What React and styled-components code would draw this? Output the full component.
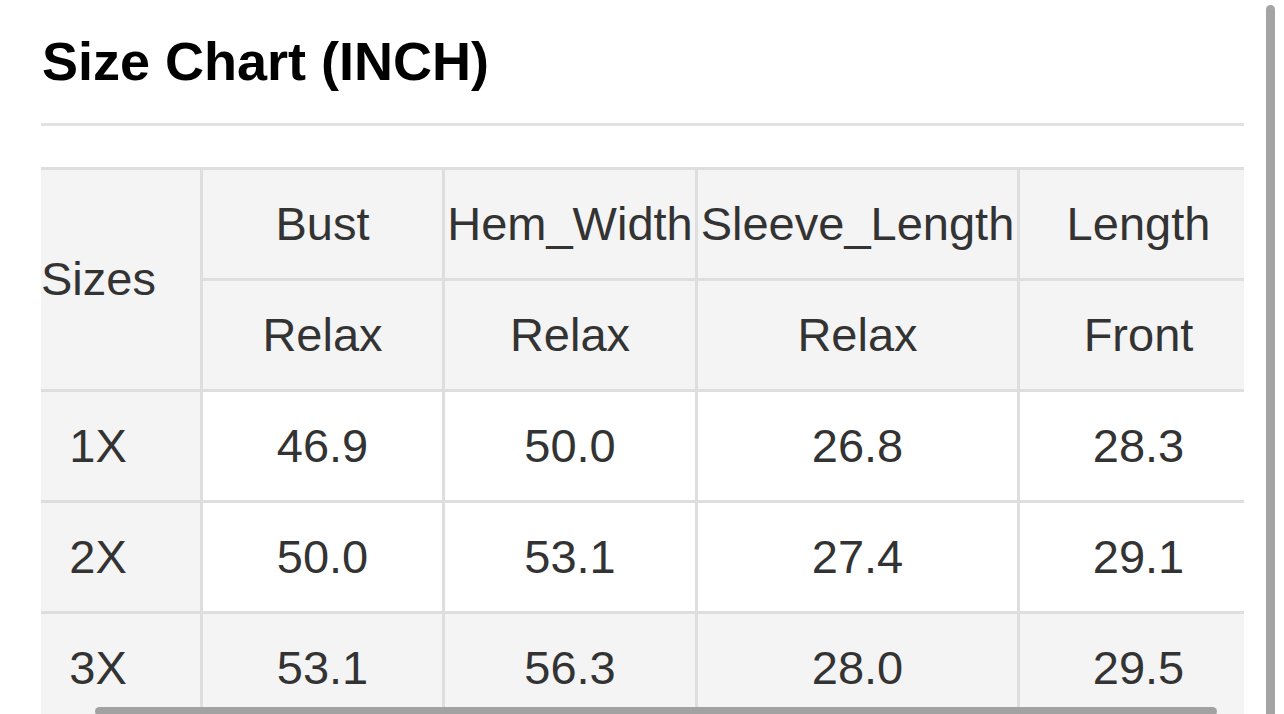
import React from "react";
import styled, { createGlobalStyle } from "styled-components";

const Global = createGlobalStyle`
  html, body { margin: 0; padding: 0; background: #fff; }
  body { font-family: "Liberation Sans", Arial, Helvetica, sans-serif; }
`;

const Screen = styled.div`
  position: relative;
  width: 1284px;
  height: 714px;
  overflow: hidden;
  background: #fff;
`;

const Content = styled.div`
  width: 1203px;
  padding: 30px 0 0 41px;
`;

const Title = styled.h1`
  margin: 0 0 0 1px;
  font-size: 54px;
  line-height: 62px;
  font-weight: 700;
  color: #000;
`;

const Rule = styled.div`
  height: 3px;
  background: #e2e2e2;
  margin-top: 31px;
`;

const TableScroller = styled.div`
  margin-top: 41px;
  width: 1203px;
  overflow: hidden;
`;

const Table = styled.table`
  border-collapse: separate;
  border-spacing: 0;
  table-layout: fixed;
  width: 1219px;
  border-top: 3px solid #dedede;
  font-size: 47px;
  color: #333;
`;

const Cell = styled.td`
  box-sizing: border-box;
  width: ${(p) => (p.$w ? `${p.$w}px` : "auto")};
  height: ${(p) => (p.$tall ? "auto" : "111px")};
  padding: 0 ${(p) => (p.$label ? "45px" : "0")} 0 0;
  border-right: 3px solid #dedede;
  border-bottom: 3px solid #dedede;
  background: ${(p) => (p.$shade ? "#f4f4f4" : "#fff")};
  text-align: center;
  vertical-align: middle;
  white-space: nowrap;
  font-weight: 400;
  line-height: 1.15;
`;

const VScroll = styled.div`
  position: absolute;
  left: 1266px;
  top: 5px;
  width: 9px;
  height: 720px;
  border-radius: 5px;
  background: #a4a4a4;
`;

const HScroll = styled.div`
  position: absolute;
  left: 95px;
  top: 707px;
  width: 1122px;
  height: 9px;
  border-radius: 5px;
  background: #a2a2a2;
`;

const widths = [162, 242, 253, 322, 240];
const top = ["Bust", "Hem_Width", "Sleeve_Length", "Length"];
const sub = ["Relax", "Relax", "Relax", "Front"];
const rows = [
  ["1X", "46.9", "50.0", "26.8", "28.3"],
  ["2X", "50.0", "53.1", "27.4", "29.1"],
  ["3X", "53.1", "56.3", "28.0", "29.5"],
];

export default function App() {
  return (
    <Screen>
      <Global />
      <Content>
        <Title>Size Chart (INCH)</Title>
        <Rule />
        <TableScroller>
          <Table>
            <thead>
              <tr>
                <Cell as="th" rowSpan={2} $w={widths[0]} $tall $label $shade>
                  Sizes
                </Cell>
                {top.map((t, i) => (
                  <Cell as="th" key={t} $w={widths[i + 1]} $shade>
                    {t}
                  </Cell>
                ))}
              </tr>
              <tr>
                {sub.map((t, i) => (
                  <Cell as="th" key={i} $shade>
                    {t}
                  </Cell>
                ))}
              </tr>
            </thead>
            <tbody>
              {rows.map((r, ri) => (
                <tr key={r[0]}>
                  {r.map((v, ci) => (
                    <Cell key={ci} $label={ci === 0} $shade={ci === 0 || ri === 2}>
                      {v}
                    </Cell>
                  ))}
                </tr>
              ))}
            </tbody>
          </Table>
        </TableScroller>
      </Content>
      <VScroll />
      <HScroll />
    </Screen>
  );
}
